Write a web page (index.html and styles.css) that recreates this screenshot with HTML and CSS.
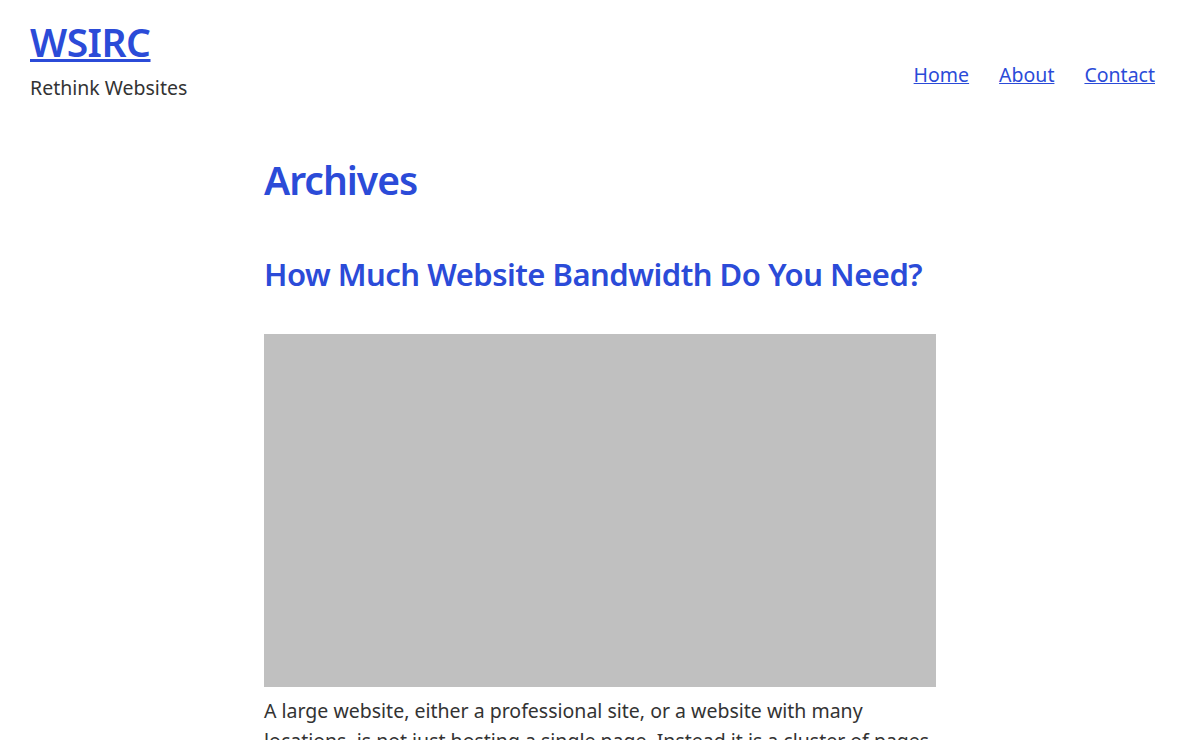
FILE: index.html
```html
<!DOCTYPE html>
<html lang="en">
<head>
  <meta charset="UTF-8">
  <meta name="viewport" content="width=device-width, initial-scale=1.0">
  <title>Archives - WSIRC</title>
  <link rel="stylesheet" href="styles.css">
</head>
<body>
  <header class="site-header">
    <div class="branding">
      <a class="site-title" href="#">WSIRC</a>
      <p class="tagline">Rethink Websites</p>
    </div>
    <nav class="site-nav">
      <a href="#">Home</a>
      <a href="#">About</a>
      <a href="#">Contact</a>
    </nav>
  </header>

  <main class="content">
    <h1 class="page-title">Archives</h1>
    <article class="post">
      <h2 class="post-title"><a href="#">How Much Website Bandwidth Do You Need?</a></h2>
      <div class="post-image"></div>
      <p>A large website, either a professional site, or a website with many locations, is not just hosting a single page. Instead it is a cluster of pages that all need bandwidth to load.</p>
    </article>
  </main>
</body>
</html>
```

FILE: styles.css
```css
body {
  font-family: "Noto Sans", "Open Sans", sans-serif;
  color: #333333;
  background: #ffffff;
  margin: 0;
  padding: 0;
}

a {
  color: #2b4bd8;
}

.site-header {
  display: flex;
  justify-content: space-between;
  align-items: center;
  padding: 18px 45px 0 30px;
}

.site-title {
  font-size: 39px;
  line-height: 48px;
  font-weight: 600;
  letter-spacing: -0.5px;
}

.tagline {
  margin: 8px 0 0;
  font-size: 19.5px;
  line-height: 28px;
}

.site-nav {
  display: flex;
  gap: 30px;
  font-size: 19.5px;
  padding-top: 28px;
}

.content {
  width: 672px;
  margin: 0 auto;
}

.page-title {
  color: #2b4bd8;
  font-size: 39px;
  font-weight: 600;
  line-height: 50px;
  letter-spacing: -1px;
  margin: 53px 0 0;
}

.post-title {
  font-size: 31px;
  font-weight: 600;
  line-height: 42px;
  letter-spacing: -0.5px;
  margin: 48px 0 39px;
}

.post-title a {
  text-decoration: none;
}

.post-image {
  height: 353px;
  background: #c0c0c0;
}

.post p {
  font-size: 19.5px;
  line-height: 30px;
  margin: 9px 0;
}
```
